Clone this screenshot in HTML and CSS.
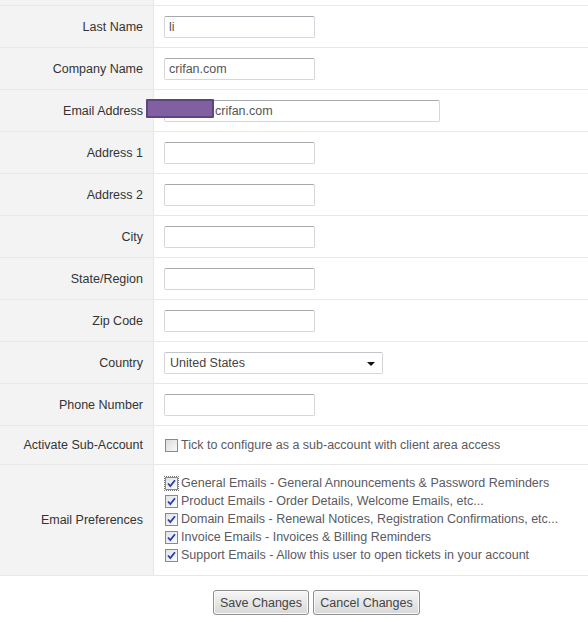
FILE: index.html
```html
<!DOCTYPE html>
<html>
<head>
<meta charset="utf-8">
<link rel="stylesheet" href="styles.css">
</head>
<body>
<div class="page">
  <div class="form">
    <div class="row row-partial"><div class="label"></div><div class="field"></div></div>
    <div class="row"><div class="label">Last Name</div><div class="field"><input class="text" type="text" value="li"></div></div>
    <div class="row"><div class="label">Company Name</div><div class="field"><input class="text" type="text" value="crifan.com"></div></div>
    <div class="row"><div class="label">Email Address</div><div class="field"><input class="text wide" type="text" value="crifan.com"></div></div>
    <div class="row"><div class="label">Address 1</div><div class="field"><input class="text" type="text"></div></div>
    <div class="row"><div class="label">Address 2</div><div class="field"><input class="text" type="text"></div></div>
    <div class="row"><div class="label">City</div><div class="field"><input class="text" type="text"></div></div>
    <div class="row"><div class="label">State/Region</div><div class="field"><input class="text" type="text"></div></div>
    <div class="row"><div class="label">Zip Code</div><div class="field"><input class="text" type="text"></div></div>
    <div class="row"><div class="label">Country</div><div class="field"><div class="select"><span>United States</span><i class="arrow"></i></div></div></div>
    <div class="row"><div class="label">Phone Number</div><div class="field"><input class="text" type="text"></div></div>
    <div class="row row-short"><div class="label">Activate Sub-Account</div><div class="field"><label class="check"><span class="box"></span>Tick to configure as a sub-account with client area access</label></div></div>
    <div class="row row-prefs"><div class="label">Email Preferences</div><div class="field list">
      <label class="check"><span class="box on focus"><svg viewBox="0 0 13 13" width="13" height="13"><path d="M3 6.5 L5.3 9 L10 3.2" fill="none" stroke="#2d3f9e" stroke-width="1.8"/></svg></span>General Emails - General Announcements &amp; Password Reminders</label>
      <label class="check"><span class="box on"><svg viewBox="0 0 13 13" width="13" height="13"><path d="M3 6.5 L5.3 9 L10 3.2" fill="none" stroke="#2d3f9e" stroke-width="1.8"/></svg></span>Product Emails - Order Details, Welcome Emails, etc...</label>
      <label class="check"><span class="box on"><svg viewBox="0 0 13 13" width="13" height="13"><path d="M3 6.5 L5.3 9 L10 3.2" fill="none" stroke="#2d3f9e" stroke-width="1.8"/></svg></span>Domain Emails - Renewal Notices, Registration Confirmations, etc...</label>
      <label class="check"><span class="box on"><svg viewBox="0 0 13 13" width="13" height="13"><path d="M3 6.5 L5.3 9 L10 3.2" fill="none" stroke="#2d3f9e" stroke-width="1.8"/></svg></span>Invoice Emails - Invoices &amp; Billing Reminders</label>
      <label class="check"><span class="box on"><svg viewBox="0 0 13 13" width="13" height="13"><path d="M3 6.5 L5.3 9 L10 3.2" fill="none" stroke="#2d3f9e" stroke-width="1.8"/></svg></span>Support Emails - Allow this user to open tickets in your account</label>
    </div></div>
  </div>
  <div class="actions">
    <button class="btn btn-save">Save Changes</button>
    <button class="btn btn-cancel">Cancel Changes</button>
  </div>
  <div class="redact"></div>
</div>
</body>
</html>
```
FILE: styles.css
```css
html, body {
  margin: 0;
  padding: 0;
  background: #fff;
}
body {
  font-family: "Liberation Sans", Arial, sans-serif;
  font-size: 12.5px;
  color: #333;
}
.page {
  position: relative;
  width: 588px;
  height: 622px;
  overflow: hidden;
}
.form {
  display: flex;
  flex-direction: column;
}
.row {
  display: flex;
  height: 41px;
  border-bottom: 1px solid #e8e8e8;
}
.row-partial { height: 5px; }
.row-short { height: 38px; }
.row-prefs { height: 110px; }
.label {
  width: 143px;
  flex: none;
  background: #f3f3f3;
  border-right: 1px solid #e8e8e8;
  padding-right: 10px;
  display: flex;
  align-items: center;
  justify-content: flex-end;
  color: #333;
}
.field {
  flex: 1;
  display: flex;
  align-items: center;
  padding-left: 10px;
}
.text {
  box-sizing: border-box;
  width: 151px;
  height: 22px;
  margin: 0;
  padding: 0 4px;
  border: 1px solid #d4d6dc;
  border-top-color: #a9a9b0;
  border-radius: 2px;
  font-family: "Liberation Sans", Arial, sans-serif;
  font-size: 12.5px;
  color: #555;
  background: #fff;
  outline: none;
}
.text.wide {
  width: 276px;
  padding-left: 50px;
}
.select {
  box-sizing: border-box;
  width: 219px;
  height: 22px;
  border: 1px solid #d4d6dc;
  border-top-color: #c2c4cc;
  border-radius: 2px;
  display: flex;
  align-items: center;
  justify-content: space-between;
  padding: 0 7px 0 5px;
  color: #444;
}
.arrow {
  width: 0;
  height: 0;
  border-left: 4px solid transparent;
  border-right: 4px solid transparent;
  border-top: 4px solid #111;
  margin-top: 2px;
}
.check {
  display: flex;
  align-items: center;
  color: #5a5a5f;
  height: 18px;
  white-space: nowrap;
}
.box {
  box-sizing: border-box;
  width: 13px;
  height: 13px;
  margin: 0 3px 0 1px;
  border: 1px solid #8a8a8a;
  background: linear-gradient(135deg, #dcdcdc, #f8f8f8);
  display: inline-flex;
  flex: none;
  position: relative;
}
.box svg {
  position: absolute;
  left: -1px;
  top: -1px;
}
.box.on {
  background: linear-gradient(135deg, #dfe3ea, #fbfbfd);
}
.box.focus {
  outline: 1px dotted #777;
  outline-offset: 0;
}
.list {
  flex-direction: column;
  align-items: flex-start;
  justify-content: flex-start;
  padding-top: 9px;
}
.actions {
  display: flex;
  gap: 4px;
  padding: 14px 0 0 213px;
}
.btn {
  box-sizing: border-box;
  height: 25px;
  margin: 0;
  padding: 0;
  border: 1px solid #8e8e8e;
  border-radius: 3px;
  background: linear-gradient(#f6f6f6, #d8d8d8);
  font-family: "Liberation Sans", Arial, sans-serif;
  font-size: 12.5px;
  color: #444;
  box-shadow: inset 0 0 0 1px #fafafa;
}
.btn-save { width: 96px; }
.btn-cancel { width: 107px; }
.redact {
  position: absolute;
  left: 146px;
  top: 99px;
  width: 68px;
  height: 19px;
  box-sizing: border-box;
  background: #8060a0;
  border: 2px solid #5e4480;
  border-radius: 1px;
}
```
